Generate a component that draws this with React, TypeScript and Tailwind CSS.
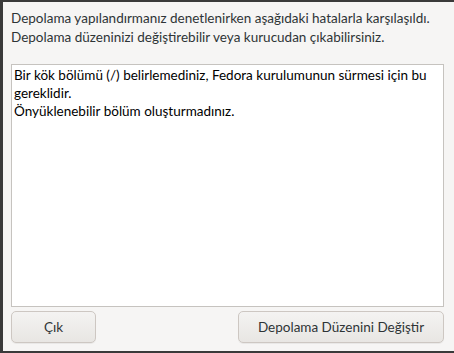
import React from "react";

const font = { fontFamily: 'Lato, "Noto Sans", sans-serif' };

const btnClass =
  "h-8 flex items-center justify-center rounded-[5px] border border-[#cdc7c2] bg-gradient-to-b from-[#f4f3f2] to-[#e8e6e3] text-[13.5px] text-[#2e3436] shadow-[0_1px_0_rgba(0,0,0,0.05)]";

const App: React.FC = () => {
  return (
    <div
      className="w-[454px] h-[353px] bg-[#3a3a3a] pt-[2px] pb-[2px] pl-[3px] flex"
      style={font}
    >
      <div className="flex-1 bg-[#f6f5f4] flex flex-col pl-[8px] pr-[10px] pt-[7px] pb-[8px] text-[#2e3436]">
        {/* Message */}
        <div className="text-[13.5px] leading-[19px] whitespace-nowrap">
          <p>Depolama yapılandırmanız denetlenirken aşağıdaki hatalarla karşılaşıldı.</p>
          <p>Depolama düzeninizi değiştirebilir veya kurucudan çıkabilirsiniz.</p>
        </div>

        {/* Error list */}
        <div className="mt-[17px] flex-1 bg-white border border-[#c6c3bf] px-[2px] pt-[1px] text-[13.5px] leading-[18px] text-black whitespace-nowrap">
          <p>
            Bir kök bölümü (/) belirlemediniz, Fedora kurulumunun sürmesi için bu
            <br />
            gereklidir.
          </p>
          <p>Önyüklenebilir bölüm oluşturmadınız.</p>
        </div>

        {/* Buttons */}
        <div className="mt-[4px] flex justify-between">
          <button className={`${btnClass} w-[85px]`}>Çık</button>
          <button className={`${btnClass} w-[206px]`}>Depolama Düzenini Değiştir</button>
        </div>
      </div>
    </div>
  );
};

export default App;
